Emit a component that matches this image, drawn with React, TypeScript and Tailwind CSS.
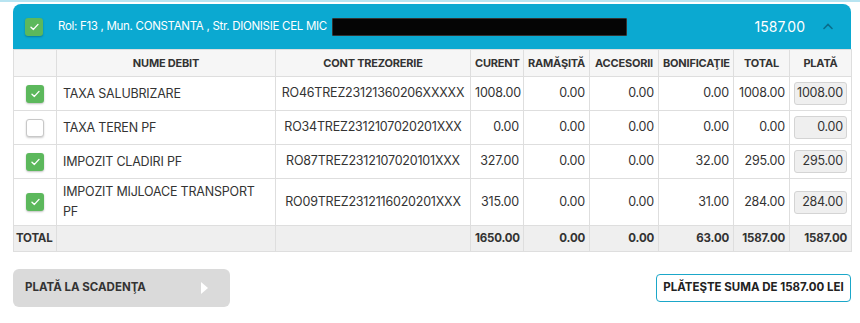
import React from "react";

interface Debit {
  checked: boolean;
  name: string;
  cont: string;
  curent: string;
  ramasita: string;
  accesorii: string;
  bonificatie: string;
  total: string;
  plata: string;
}

const debits: Debit[] = [
  { checked: true, name: "TAXA SALUBRIZARE", cont: "RO46TREZ23121360206XXXXX", curent: "1008.00", ramasita: "0.00", accesorii: "0.00", bonificatie: "0.00", total: "1008.00", plata: "1008.00" },
  { checked: false, name: "TAXA TEREN PF", cont: "RO34TREZ2312107020201XXX", curent: "0.00", ramasita: "0.00", accesorii: "0.00", bonificatie: "0.00", total: "0.00", plata: "0.00" },
  { checked: true, name: "IMPOZIT CLADIRI PF", cont: "RO87TREZ2312107020101XXX", curent: "327.00", ramasita: "0.00", accesorii: "0.00", bonificatie: "32.00", total: "295.00", plata: "295.00" },
  { checked: true, name: "IMPOZIT MIJLOACE TRANSPORT PF", cont: "RO09TREZ2312116020201XXX", curent: "315.00", ramasita: "0.00", accesorii: "0.00", bonificatie: "31.00", total: "284.00", plata: "284.00" },
];

function Check({ checked }: { checked: boolean }) {
  return checked ? (
    <div className="w-[18px] h-[18px] rounded-[3px] bg-[#5cb85c] flex items-center justify-center shadow-[0_1px_2px_rgba(0,0,0,0.25)]">
      <svg width="9" height="8" viewBox="0 0 9 8" fill="none">
        <path d="M1 4.2 3.4 6.4 8 1.4" stroke="white" strokeWidth="1.4" strokeLinecap="round" strokeLinejoin="round" />
      </svg>
    </div>
  ) : (
    <div className="w-[18px] h-[18px] rounded-[3px] bg-white border border-[#c8c8c8] shadow-[0_1px_2px_rgba(0,0,0,0.2)]" />
  );
}

const td = "border border-[#dedede] px-[4px]";

export default function App() {
  return (
    <div className="w-[860px] h-[323px] bg-white text-[#333] font-['Inter','Noto_Sans',sans-serif]">
      <div className="h-[2px] bg-[#b8e4f1]" />
      <div className="ml-[13px] mr-[9px] mt-[2px]">
        {/* Header */}
        <div className="h-[45px] bg-[#0ba9d1] rounded-t-[8px] flex items-center pl-[12px] pr-[18px] text-white">
          <Check checked />
          <span className="ml-[15px] text-[11.5px] tracking-[-0.3px]">Rol: F13 , Mun. CONSTANTA , Str. DIONISIE CEL MIC</span>
          <div className="ml-[5px] w-[295px] h-[18px] bg-[#050505] rounded-[1px] border border-[#333]" />
          <span className="ml-auto text-[14px]">1587.00</span>
          <svg className="ml-[18px]" width="10" height="7" viewBox="0 0 10 7" fill="none">
            <path d="M1 5.5 5 1.5 9 5.5" stroke="#0a6e8c" strokeWidth="1.6" strokeLinecap="round" />
          </svg>
        </div>

        {/* Table */}
        <table className="w-[838px] border-collapse table-fixed text-[12.5px] tracking-[-0.2px]">
          <colgroup>
            <col className="w-[43px]" />
            <col className="w-[219px]" />
            <col className="w-[195px]" />
            <col className="w-[53px]" />
            <col className="w-[66px]" />
            <col className="w-[69px]" />
            <col className="w-[75px]" />
            <col className="w-[56px]" />
            <col className="w-[62px]" />
          </colgroup>
          <thead>
            <tr className="h-[27px] bg-[#f6f6f6] text-[11px] text-center">
              <th className={td}></th>
              <th className={td + " font-bold"}>NUME DEBIT</th>
              <th className={td + " font-bold"}>CONT TREZORERIE</th>
              <th className={td + " font-bold"}>CURENT</th>
              <th className={td + " font-bold"}>RAMĂŞITĂ</th>
              <th className={td + " font-bold"}>ACCESORII</th>
              <th className={td + " font-bold"}>BONIFICAŢIE</th>
              <th className={td + " font-bold"}>TOTAL</th>
              <th className={td + " font-bold"}>PLATĂ</th>
            </tr>
          </thead>
          <tbody>
            {debits.map((d) => (
              <tr key={d.cont} className={d.name.length > 20 ? "h-[47px]" : "h-[34px]"}>
                <td className={td}>
                  <div className="flex justify-center">
                    <Check checked={d.checked} />
                  </div>
                </td>
                <td className={td + " pl-[6px] leading-[20px]"}>{d.name}</td>
                <td className={td + " text-center"}>{d.cont}</td>
                <td className={td + " text-right"}>{d.curent}</td>
                <td className={td + " text-right"}>{d.ramasita}</td>
                <td className={td + " text-right"}>{d.accesorii}</td>
                <td className={td + " text-right"}>{d.bonificatie}</td>
                <td className={td + " text-right"}>{d.total}</td>
                <td className={td}>
                  <div className="h-[23px] rounded-[3px] bg-[#efefef] border border-[#d4d4d4] flex items-center justify-end pr-[3px]">
                    {d.plata}
                  </div>
                </td>
              </tr>
            ))}
            <tr className="h-[26px] bg-[#efefef] text-[11.5px] font-bold">
              <td className={td + " pl-[2px]"}>TOTAL</td>
              <td className={td}></td>
              <td className={td}></td>
              <td className={td + " text-right"}>1650.00</td>
              <td className={td + " text-right"}>0.00</td>
              <td className={td + " text-right"}>0.00</td>
              <td className={td + " text-right"}>63.00</td>
              <td className={td + " text-right"}>1587.00</td>
              <td className={td + " text-right"}>1587.00</td>
            </tr>
          </tbody>
        </table>

        {/* Footer */}
        <div className="mt-[17px] flex items-center justify-between">
          <div className="w-[217px] h-[38px] rounded-[6px] bg-[#dadada] flex items-center pl-[12px] text-[11.5px] font-bold text-[#333]">
            PLATĂ LA SCADENŢA
            <svg className="ml-[54px]" width="9" height="14" viewBox="0 0 9 14">
              <path d="M1 1 8 7 1 13Z" fill="white" />
            </svg>
          </div>
          <div className="w-[195px] h-[28px] rounded-[4px] border-[1.5px] border-[#1ba7c9] bg-white flex items-center justify-center text-[11.5px] font-bold text-[#222]">
            PLĂTEŞTE SUMA DE 1587.00 LEI
          </div>
        </div>
      </div>
    </div>
  );
}
